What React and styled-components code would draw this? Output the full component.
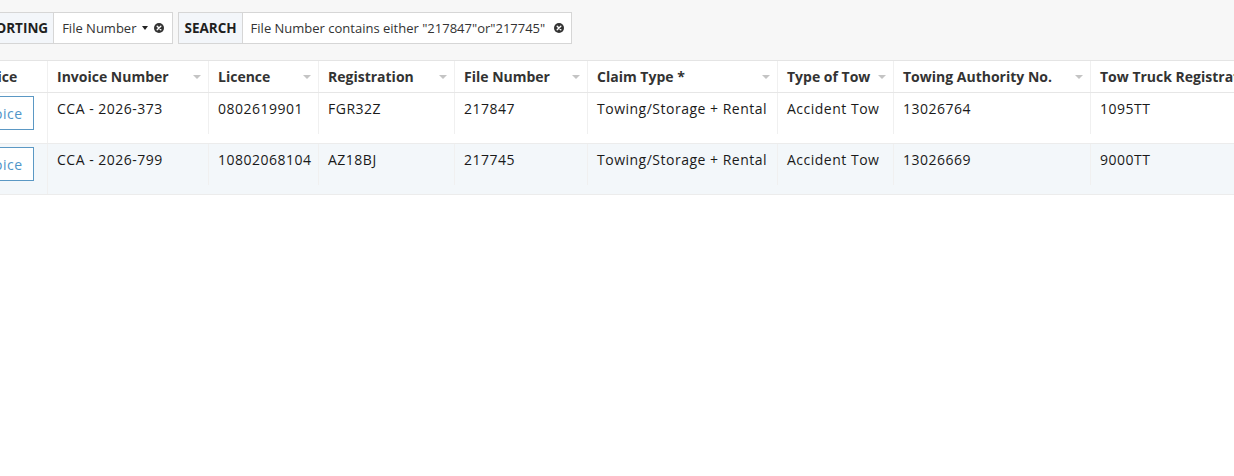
import React from "react";
import styled, { createGlobalStyle } from "styled-components";

const Global = createGlobalStyle`
  html, body { margin: 0; padding: 0; background: #ffffff; }
  body { font-family: "Open Sans", "DejaVu Sans", sans-serif; color: #222; overflow: hidden; }
`;

const COLS = [95, 161, 110, 136, 133, 190, 116, 197, 240];
const template = COLS.map((w) => `${w}px`).join(" ");

const Viewport = styled.div`
  width: 1234px;
  height: 476px;
  overflow: hidden;
`;

/* the grid is scrolled sideways, so its first column starts off-screen */
const Sheet = styled.div`
  margin-left: -47px;
  width: max-content;
`;

const Toolbar = styled.div`
  background: #f7f7f7;
  width: 1420px;
  height: 61px;
  display: flex;
  align-items: flex-start;
  gap: 5px;
  padding: 12px 0 0 29px;
  box-sizing: border-box;
  border-bottom: 1px solid #e4e4e4;
`;

const Chip = styled.div`
  display: flex;
  height: 32px;
  border: 1px solid #d6d6d6;
  box-sizing: border-box;
  background: #fff;
`;

const ChipLabel = styled.div`
  display: flex;
  align-items: center;
  padding: 0 5px;
  background: #f3f6fa;
  border-right: 1px solid #d6d6d6;
  font-weight: 700;
  font-size: 13.5px;
  color: #1f1f1f;
`;

const ChipValue = styled.div`
  display: flex;
  align-items: center;
  gap: ${(p) => p.$gap}px;
  padding: 0 ${(p) => p.$right}px 0 8px;
  font-size: 13px;
  color: #333;
`;

const Caret = styled.span`
  width: 0;
  height: 0;
  border-left: 3.5px solid transparent;
  border-right: 3.5px solid transparent;
  border-top: 4px solid #222;
`;

const ClearIcon = () => (
  <svg width="10" height="10" viewBox="0 0 10 10">
    <circle cx="5" cy="5" r="5" fill="#333" />
    <path d="M3.2 3.2 L6.8 6.8 M6.8 3.2 L3.2 6.8" stroke="#fff" strokeWidth="1.4" strokeLinecap="round" />
  </svg>
);

const Grid = styled.div`
  display: grid;
  grid-template-columns: ${template};
`;

const HeadRow = styled(Grid)`
  height: 31px;
  border-bottom: 1px solid #e6e6e6;
`;

const HeadCell = styled.div`
  display: flex;
  align-items: center;
  justify-content: space-between;
  padding: 0 7px 0 ${(p) => (p.$first ? 14 : 9)}px;
  border-right: 1px solid #f0f0f0;
  font-size: 14px;
  font-weight: 700;
  color: #333;
  white-space: nowrap;
  overflow: hidden;
`;

const SortArrow = styled.span`
  flex: none;
  width: 0;
  height: 0;
  border-left: 4px solid transparent;
  border-right: 4px solid transparent;
  border-top: 4px solid #c4c4c4;
  margin-left: 6px;
`;

const BodyRow = styled(Grid)`
  height: 50px;
  border-bottom: 1px solid #ececec;
  background: ${(p) => (p.$alt ? "#f3f7fa" : "#ffffff")};
`;

const Cell = styled.div`
  padding: 6px 9px 0;
  border-right: 1px solid #f0f0f0;
  font-size: 14px;
  letter-spacing: 0.5px;
  color: #1a1a1a;
  white-space: nowrap;
  overflow: hidden;
`;

const ActionCell = styled(Cell)`
  padding-top: 3px;
`;

const InvoiceButton = styled.button`
  height: 34px;
  padding: 0 10px;
  border: 1px solid #5b98c4;
  background: #fff;
  color: #4f95c8;
  font-family: inherit;
  font-size: 14px;
  letter-spacing: 0.5px;
`;

const headers = [
  { label: "Invoice", sort: false },
  { label: "Invoice Number", sort: true },
  { label: "Licence", sort: true },
  { label: "Registration", sort: true },
  { label: "File Number", sort: true },
  { label: "Claim Type *", sort: true },
  { label: "Type of Tow", sort: true },
  { label: "Towing Authority No.", sort: true },
  { label: "Tow Truck Registration", sort: true },
];

const rows = [
  ["CCA - 2026-373", "0802619901", "FGR32Z", "217847", "Towing/Storage + Rental", "Accident Tow", "13026764", "1095TT"],
  ["CCA - 2026-799", "10802068104", "AZ18BJ", "217745", "Towing/Storage + Rental", "Accident Tow", "13026669", "9000TT"],
];

export default function App() {
  return (
    <Viewport>
      <Global />
      <Sheet>
        <Toolbar>
          <Chip>
            <ChipLabel>SORTING</ChipLabel>
            <ChipValue $gap={6} $right={8}>
              File Number
              <Caret />
              <ClearIcon />
            </ChipValue>
          </Chip>
          <Chip>
            <ChipLabel>SEARCH</ChipLabel>
            <ChipValue $gap={9} $right={7}>
              File Number contains either "217847"or"217745"
              <ClearIcon />
            </ChipValue>
          </Chip>
        </Toolbar>
        <HeadRow>
          {headers.map((h, i) => (
            <HeadCell key={h.label} $first={i === 0}>
              <span>{h.label}</span>
              {h.sort && <SortArrow />}
            </HeadCell>
          ))}
        </HeadRow>
        {rows.map((r, i) => (
          <BodyRow key={r[0]} $alt={i % 2 === 1}>
            <ActionCell>
              <InvoiceButton>Invoice</InvoiceButton>
            </ActionCell>
            {r.map((v, j) => (
              <Cell key={j}>{v}</Cell>
            ))}
            <Cell />
          </BodyRow>
        ))}
      </Sheet>
    </Viewport>
  );
}
